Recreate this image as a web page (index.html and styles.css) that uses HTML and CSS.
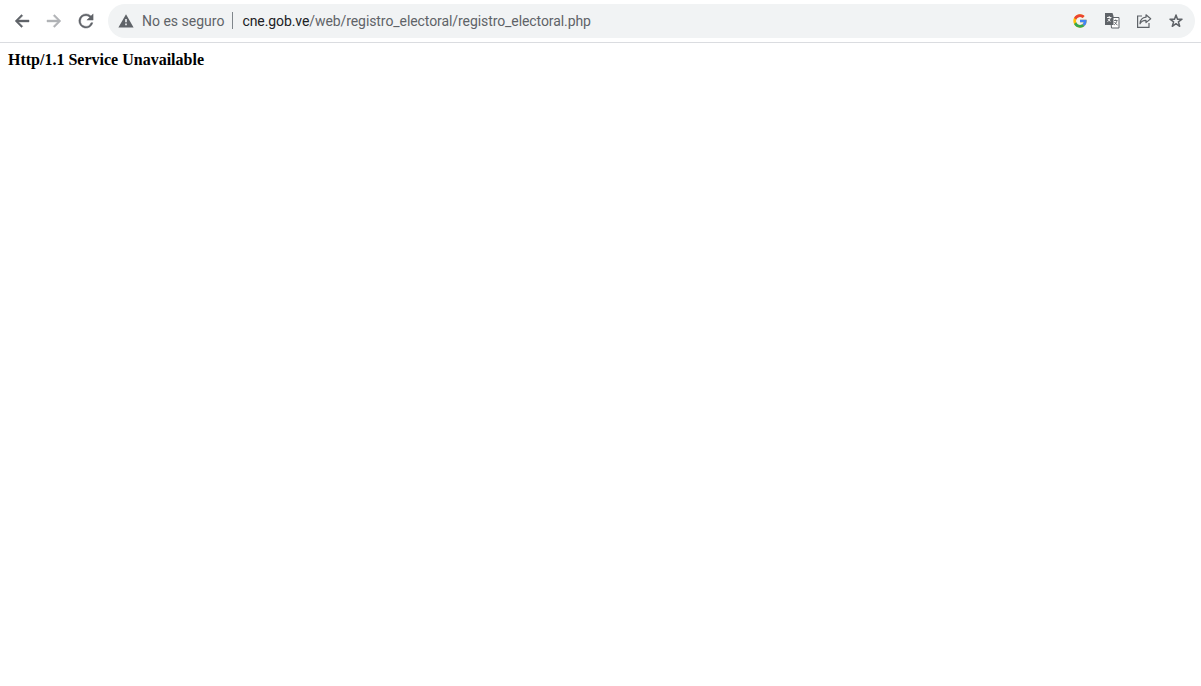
FILE: index.html
```html
<!DOCTYPE html>
<html lang="es">
<head>
  <meta charset="UTF-8" />
  <title>cne.gob.ve</title>
  <link rel="stylesheet" href="styles.css">
</head>
<body>

<header class="toolbar">
  <div class="nav-buttons">
    <svg class="nav-icon" viewBox="0 0 16 16"><path d="M15 7.100H4.400l4.300-4.300L7.500 1.600 1.100 8l6.400 6.400 1.200-1.200-4.300-4.300H15z" fill="#5f6368" stroke="#5f6368" stroke-width=".5"/></svg>
    <svg class="nav-icon" viewBox="0 0 16 16"><path d="M1 7.100h10.600L7.300 2.800l1.200-1.200L14.900 8l-6.400 6.400-1.200-1.200 4.300-4.300H1z" fill="#b1b3b6" stroke="#b1b3b6" stroke-width=".5"/></svg>
    <svg class="nav-icon" viewBox="-1 -1 18 18"><path d="M13.600 2.400A7.900 7.900 0 0 0 8 0a8 8 0 1 0 7.700 10h-2.100A6 6 0 1 1 8 2c1.700 0 3.100.7 4.200 1.800L9 7h7V0z" fill="#5f6368" stroke="#5f6368" stroke-width=".5"/></svg>
  </div>

  <div class="omnibox">
    <svg class="warn-icon" viewBox="0 0 16 16"><path d="M8 1.200 0.400 14.400h15.200zM8.800 12.200H7.200v-1.600h1.600zm0-3H7.200V5.900h1.600z" fill="#5f6368"/></svg>
    <span class="not-secure">No es seguro</span>
    <span class="divider"></span>
    <span class="url"><span class="host">cne.gob.ve</span>/web/registro_electoral/registro_electoral.php</span>

    <div class="omni-actions">
      <svg class="omni-icon" viewBox="0 0 48 48">
        <path d="M43.600 20.100H42V20H24v8h11.300C33.700 32.700 29.200 36 24 36c-6.600 0-12-5.400-12-12s5.400-12 12-12c3.100 0 5.800 1.200 8 3l5.700-5.700C34 6.100 29.300 4 24 4 13 4 4 13 4 24s9 20 20 20 20-9 20-20c0-1.300-.1-2.700-.4-3.900z" fill="#FFC107"/>
        <path d="M6.300 14.700l6.600 4.800C14.700 15.100 19 12 24 12c3.100 0 5.800 1.200 8 3l5.700-5.700C34 6.100 29.300 4 24 4 16.300 4 9.700 8.300 6.300 14.700z" fill="#EA4335"/>
        <path d="M24 44c5.200 0 9.900-2 13.400-5.200l-6.200-5.200C29.200 35.100 26.700 36 24 36c-5.200 0-9.600-3.300-11.300-7.900l-6.500 5C9.500 39.600 16.200 44 24 44z" fill="#34A853"/>
        <path d="M43.600 20.100H42V20H24v8h11.300c-.8 2.200-2.200 4.200-4.100 5.600l6.200 5.200C37 39.200 44 34 44 24c0-1.300-.1-2.700-.4-3.900z" fill="#4285F4"/>
      </svg>
      <svg class="omni-icon" viewBox="0 0 16 16">
        <path d="M6.500 4.500h8.500v10.500H7.500z" fill="#fff" stroke="#5f6368" stroke-width="1"/>
        <path d="M1 0h7.500l1 3V12H1z" fill="#5f6368"/>
        <path d="M3 4.500h4.500M5.200 3v1.500M3.500 8.500C5 8 6 6.500 6.300 4.500M4 6c.5 1 1.300 1.800 2.500 2.300" fill="none" stroke="#fff" stroke-width=".9"/>
        <path d="M10 7.500h3.500M11.700 6.500v1M13 7.500c-.4 1.800-1.400 3.300-2.900 4.500M10.500 9c.6 1.300 1.600 2.300 3 3" fill="none" stroke="#5f6368" stroke-width=".9"/>
      </svg>
      <svg class="omni-icon" viewBox="0 0 16 16" fill="none" stroke="#5f6368" stroke-width="1.200">
        <path d="M6 3H1.600v11.400h11.400V10"/>
        <path d="M10 1.800 14.700 5.800 10 9.600V7.300C7.300 7.200 5.200 8.300 4 10.800 4.200 7.300 6.400 4.600 10 4.200z" stroke-linejoin="round"/>
      </svg>
      <svg class="omni-icon" viewBox="0 0 16 16"><path d="M8 1.900 9.500 6.200H14L10.400 8.900 11.700 13.300 8 10.700 4.300 13.300 5.600 8.900 2 6.200H6.500z" fill="none" stroke="#5f6368" stroke-width="1.500" stroke-linejoin="round"/></svg>
    </div>
  </div>
</header>

<main class="page">
  <b>Http/1.1 Service Unavailable</b>
</main>

</body>
</html>
```

FILE: styles.css
```css
* {
  box-sizing: border-box;
}
html, body {
  margin: 0;
  padding: 0;
  background: #fff;
}
.toolbar {
  display: flex;
  align-items: center;
  height: 43px;
  padding: 4px 6px 5px 14px;
  border-bottom: 1px solid #dadce0;
  background: #fff;
}
.nav-buttons {
  display: flex;
  align-items: center;
  gap: 16px;
  margin-right: 14px;
}
.nav-icon {
  width: 16px;
  height: 16px;
}
.omnibox {
  flex: 1;
  display: flex;
  align-items: center;
  height: 34px;
  padding: 0 11px 0 10px;
  border-radius: 17px;
  background: #f1f3f4;
  font-family: Roboto, "Noto Sans", sans-serif;
  font-size: 14px;
}
.warn-icon {
  width: 16px;
  height: 16px;
  margin-right: 8px;
}
.not-secure {
  color: #5f6368;
}
.divider {
  width: 1px;
  height: 17px;
  margin: 0 9px 0 8px;
  background: #80868b;
}
.url {
  color: #5f6368;
  letter-spacing: -0.08px;
}
.host {
  color: #202124;
}
.omni-actions {
  display: flex;
  align-items: center;
  gap: 16px;
  margin-left: auto;
}
.omni-icon {
  width: 16px;
  height: 16px;
}
.page {
  padding: 8px;
  font-family: "Liberation Serif", serif;
  font-size: 16px;
  line-height: 18px;
  color: #000;
}
```
